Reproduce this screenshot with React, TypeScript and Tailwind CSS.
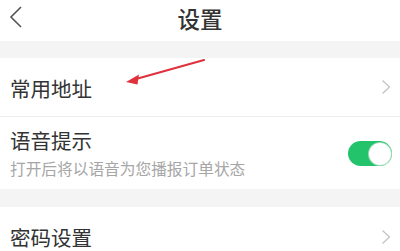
import { useState } from 'react'

const font = { fontFamily: "'Noto Sans CJK SC', 'Noto Sans', sans-serif" }

function Chevron() {
  return (
    <svg width="10" height="16" viewBox="0 0 10 16" className="shrink-0">
      <path d="M1.5 1.5 L8.5 8 L1.5 14.5" fill="none" stroke="#c4c4c4" strokeWidth="1.3" />
    </svg>
  )
}

export default function App() {
  const [voiceOn, setVoiceOn] = useState(true)

  return (
    <div className="relative w-[400px] h-[251px] overflow-hidden bg-white" style={font}>
      {/* Header */}
      <div className="relative h-[41px] flex items-center justify-center bg-white">
        <svg width="14" height="22" viewBox="0 0 14 22" className="absolute left-[9px] top-[6px]">
          <path d="M12 1 L2 11 L12 21" fill="none" stroke="#555" strokeWidth="1.6" />
        </svg>
        <span className="text-[22.5px] leading-none text-[#333] mb-[5px] font-medium">设置</span>
      </div>

      <div className="h-[17px] bg-[#f4f4f4]" />

      {/* 常用地址 */}
      <div className="h-[59px] flex items-center justify-between pl-[10px] pr-[9px] border-b border-[#eeeeee]">
        <span className="text-[20.5px] leading-none text-[#333] mt-[3px]">常用地址</span>
        <Chevron />
      </div>

      {/* 语音提示 */}
      <div className="h-[72px] flex items-center justify-between pl-[10px] pr-[8px]">
        <div className="flex flex-col">
          <span className="text-[20.5px] leading-none text-[#333] mt-[1px]">语音提示</span>
          <span className="text-[15.7px] leading-none text-[#a6a6a6] mt-[11px]">打开后将以语音为您播报订单状态</span>
        </div>
        <button
          onClick={() => setVoiceOn(!voiceOn)}
          className={`mt-[1px] w-[44px] h-[25px] rounded-full p-[1.5px] flex items-center ${voiceOn ? 'bg-[#22c36b] justify-end' : 'bg-[#e5e5e5] justify-start'}`}
        >
          <span className="w-[22px] h-[22px] rounded-full bg-white ring-1 ring-[#9bd9b4]" />
        </button>
      </div>

      <div className="h-[18px] bg-[#f4f4f4]" />

      {/* 密码设置 */}
      <div className="h-[60px] flex items-center justify-between pl-[10px] pr-[9px]">
        <span className="text-[20.5px] leading-none text-[#333] mt-[1px]">密码设置</span>
        <Chevron />
      </div>

      {/* annotation arrow */}
      <svg width="400" height="251" className="absolute left-0 top-0 pointer-events-none">
        <line x1="204" y1="60" x2="136" y2="79" stroke="#e0323c" strokeWidth="2.2" strokeLinecap="round" />
        <path d="M126 82 L139 74.5 L137.5 84.5 Z" fill="#e0323c" />
      </svg>
    </div>
  )
}
